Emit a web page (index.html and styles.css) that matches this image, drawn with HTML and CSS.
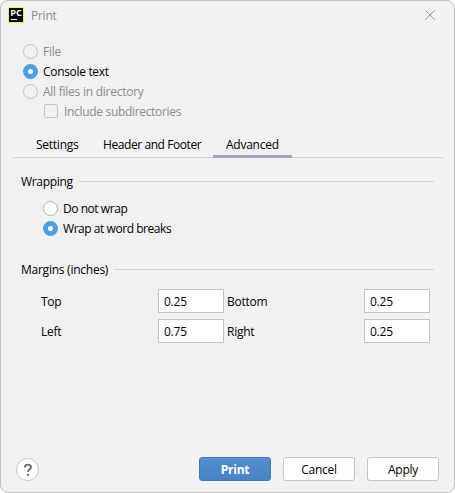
FILE: index.html
```html
<!DOCTYPE html>
<html lang="en">
<head>
<meta charset="utf-8">
<title>Print</title>
<link rel="stylesheet" href="styles.css">
</head>
<body>
<main class="dialog">
  <header class="titlebar">
    <svg class="logo" width="16" height="16" viewBox="0 0 16 16">
      <rect width="16" height="16" fill="#f5ee45"/>
      <rect x="1" y="1" width="14" height="14" fill="#000"/>
      <text class="logo-text" x="2.2" y="8.9" textLength="11.6" lengthAdjust="spacingAndGlyphs">PC</text>
      <rect x="3" y="12" width="6" height="1" fill="#fff"/>
    </svg>
    <h1 class="title">Print</h1>
    <svg class="close" width="12" height="12" viewBox="0 0 12 12"><path d="M1.2 1.2 10.8 10.8M10.8 1.2 1.2 10.8"/></svg>
  </header>

  <section class="source">
    <div class="option disabled"><span class="radio"></span><span>File</span></div>
    <div class="option"><span class="radio checked"></span><span class="tight">Console text</span></div>
    <div class="option disabled"><span class="radio"></span><span>All files in directory</span></div>
    <div class="option disabled nested"><span class="checkbox"></span><span class="tight">Include subdirectories</span></div>
  </section>

  <nav class="tabs">
    <span class="tab tab-settings">Settings</span>
    <span class="tab tab-header">Header and Footer</span>
    <span class="tab tab-advanced active">Advanced</span>
  </nav>

  <section class="wrapping">
    <h2 class="group-title"><span class="tight">Wrapping</span></h2>
    <div class="option"><span class="radio"></span><span class="tighter">Do not wrap</span></div>
    <div class="option"><span class="radio checked"></span><span class="tighter">Wrap at word breaks</span></div>
  </section>

  <section class="margins">
    <h2 class="group-title"><span>Margins (inches)</span></h2>
    <div class="fields">
      <span class="label">Top</span><span class="field">0.25</span>
      <span class="label">Bottom</span><span class="field">0.25</span>
      <span class="label">Left</span><span class="field">0.75</span>
      <span class="label">Right</span><span class="field">0.25</span>
    </div>
  </section>

  <footer class="actions">
    <span class="help"><svg width="10" height="14" viewBox="0 0 10 14"><path d="M1.9 4.4C1.9 2.5 3 1.6 4.9 1.6S8 2.6 8 4.2C8 6.3 5 6.4 5 9.1"/><rect x="4" y="10.9" width="2" height="2"/></svg></span>
    <span class="button primary">Print</span>
    <span class="button">Cancel</span>
    <span class="button">Apply</span>
  </footer>
</main>
</body>
</html>
```

FILE: styles.css
```css
* { box-sizing: border-box; }

body {
  margin: 0;
  background: #fff;
  color: #000;
  font: 12px/20px "Open Sans", "Noto Sans", sans-serif;
  letter-spacing: -0.25px;
  white-space: nowrap;
}

.dialog {
  display: flex;
  flex-direction: column;
  width: 455px;
  height: 493px;
  border: 1px solid #c2c2c2;
  border-radius: 8px;
  background: #f1f1f1;
}

h1, h2 { margin: 0; font-size: 12px; font-weight: 400; }

.tight { letter-spacing: -0.32px; }
.tighter { letter-spacing: -0.45px; }

.titlebar {
  display: flex;
  align-items: center;
  height: 41px;
  padding: 0 18px 13px 7px;
}
.title { margin: 2px 0 0 7px; color: #8c8c8c; }
.logo-text { fill: #fff; font: 700 8.5px "Open Sans", sans-serif; letter-spacing: 0; }
.close { margin-left: auto; fill: none; stroke: #999; stroke-width: 1; }

.source { height: 91px; padding-left: 22px; }
.option { display: flex; align-items: center; height: 20px; gap: 5px; }
.option.nested { padding-left: 21px; gap: 6px; }
.disabled { color: #8c8c8c; }

.radio { width: 15px; height: 15px; margin-bottom: 1px; border: 1px solid #b0b0b0; border-radius: 50%; background: #fff; }
.disabled .radio, .disabled .checkbox { border-color: #c4c4c4; background: #f1f1f1; }
.radio.checked { border: 5px solid #4e9de7; }
.checkbox { width: 14px; height: 14px; margin-bottom: 2px; border: 1px solid #c4c4c4; border-radius: 2px; }

.tabs {
  display: flex;
  height: 25px;
  width: 430px;
  margin-left: 12px;
  border-bottom: 1px solid #d1d1d1;
}
.tab { height: 25px; padding-top: 2px; }
.tab-settings { width: 77px; padding-left: 23px; }
.tab-header { width: 123px; padding-left: 13px; letter-spacing: -0.42px; }
.tab-advanced { width: 79px; padding-left: 13px; }
.tab.active { border-bottom: 3px solid #9ca7b8; }

.group-title { display: flex; align-items: center; height: 20px; gap: 6px; }
.group-title::after { content: ""; flex: 1; height: 1px; margin-bottom: 1px; background: #d1d1d1; }

.wrapping { height: 88px; padding: 14px 20px 0; }
.wrapping .group-title { margin-bottom: 7px; }
.wrapping .option { padding-left: 22px; }

.margins { padding: 14px 20px 0; }
.fields {
  display: grid;
  grid-template-columns: 117px 69px 137px 66px;
  grid-auto-rows: 24px;
  row-gap: 6px;
  align-items: center;
  margin: 9px 0 0 20px;
}
.label { padding-top: 2px; }
.field { width: 66px; height: 24px; padding-left: 5px; border: 1px solid #c4c4c4; background: #fff; line-height: 23px; }

.actions { display: flex; align-items: center; gap: 12px; height: 24px; margin: auto 15px 11px; }
.help {
  display: grid;
  place-items: center;
  width: 23px;
  height: 23px;
  margin: 1px auto 0 0;
  border: 1px solid #c4c4c4;
  border-radius: 50%;
  background: #fff;
}
.help path { fill: none; stroke: #6e6e6e; stroke-width: 1.9; }
.help rect { fill: #6e6e6e; }
.button { width: 72px; height: 24px; border: 1px solid #c4c4c4; border-radius: 3px; background: #fff; line-height: 23px; text-align: center; }
.button.primary { border-color: #4079b8; background: linear-gradient(#528fcf, #4784c4); color: #fff; font-weight: 700; }
```
